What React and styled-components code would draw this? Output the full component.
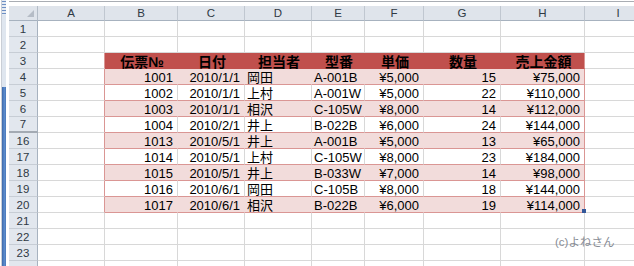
import React from "react"
import styled, { createGlobalStyle, css } from "styled-components"

const GlobalStyle = createGlobalStyle`
  html, body {
    margin: 0;
    padding: 0;
    background: #fff;
    overflow: hidden;
  }
`

const GRID = "#d8d8d8"
const PINK_LINE = "#da9694"
const BAND = "#f2dcdb"
const HEAD = "#c0504d"
const FONT = `"Liberation Sans", "Noto Sans CJK JP", sans-serif`

const columns = ["A", "B", "C", "D", "E", "F", "G", "H", "I"]
const widths = [29, 67, 73, 67, 67, 53, 59, 77, 84, 67]
const align = ["right", "right", "left", "left", "right", "right", "right"]

const header = ["伝票№", "日付", "担当者", "型番", "単価", "数量", "売上金額"]

const records = {
  4: ["1001", "2010/1/1", "岡田", "A-001B", "¥5,000", "15", "¥75,000"],
  5: ["1002", "2010/1/1", "上村", "A-001W", "¥5,000", "22", "¥110,000"],
  6: ["1003", "2010/1/1", "相沢", "C-105W", "¥8,000", "14", "¥112,000"],
  7: ["1004", "2010/2/1", "井上", "B-022B", "¥6,000", "24", "¥144,000"],
  16: ["1013", "2010/5/1", "井上", "A-001B", "¥5,000", "13", "¥65,000"],
  17: ["1014", "2010/5/1", "上村", "C-105W", "¥8,000", "23", "¥184,000"],
  18: ["1015", "2010/5/1", "井上", "B-033W", "¥7,000", "14", "¥98,000"],
  19: ["1016", "2010/6/1", "岡田", "C-105B", "¥8,000", "18", "¥144,000"],
  20: ["1017", "2010/6/1", "相沢", "B-022B", "¥6,000", "19", "¥114,000"],
}

const visibleRows = [1, 2, 3, 4, 5, 6, 7, 16, 17, 18, 19, 20, 21, 22, 23, 24]

const Window = styled.div`
  display: flex;
  width: 634px;
  height: 266px;
  overflow: hidden;
  background: #fff;
  font-family: ${FONT};
`

const Splitter = styled.div`
  display: flex;
  flex-direction: column;
  flex: 0 0 4px;
  margin: 0 3px 0 1px;
  border-left: 1px solid #c9ced6;
`

const SplitGrip = styled.div`
  height: 15px;
  background-image: radial-gradient(circle, #6d8fc4 45%, transparent 50%);
  background-size: 2px 3px;
  background-color: #e6ebf2;
`

const SplitPane = styled.div`
  height: 72px;
  background: #dfe6ef;
`

const SplitBar = styled.div`
  flex: 1;
  background: linear-gradient(90deg, #3d68aa, #5c8ccc 60%, #4a77b8);
`

const Main = styled.div`
  position: relative;
  flex: 1;
  min-width: 0;
  overflow: hidden;
`

const TopEdge = styled.div`
  height: 4px;
  margin-top: 1px;
  border-top: 1px solid #a9adb3;
`

const Sheet = styled.div`
  display: grid;
  grid-template-columns: ${widths.map((w) => `${w}px`).join(" ")};
  grid-template-rows: 15px;
  grid-auto-rows: 16px;
`

const Corner = styled.div`
  position: relative;
  box-sizing: border-box;
  background: #dfe4eb;
  border-right: 1px solid #b3bcc7;
  border-bottom: 1px solid #a7b2bf;

  &::after {
    content: "";
    position: absolute;
    right: 3px;
    bottom: 3px;
    border-style: solid;
    border-width: 0 0 7px 7px;
    border-color: transparent transparent #b5bcc6 transparent;
  }
`

const ColHead = styled.div`
  box-sizing: border-box;
  display: flex;
  align-items: center;
  justify-content: center;
  background: #dfe4eb;
  border-right: 1px solid #c0c7d0;
  border-bottom: 1px solid #a7b2bf;
  color: #2f3944;
  font-size: 11.5px;
  line-height: 14px;
`

const RowHead = styled.div`
  box-sizing: border-box;
  display: flex;
  align-items: center;
  justify-content: center;
  background: #e2e7ee;
  border-right: 1px solid #a7b2bf;
  border-bottom: ${({ $hidden }) => ($hidden ? "2px solid #a3aab3" : "1px solid #c7cdd5")};
  color: #2f3944;
  font-size: 11.5px;
  line-height: 14px;
`

const fills = {
  plain: css`
    background: #fff;
    border-right-color: ${GRID};
    border-bottom-color: ${GRID};
  `,
  head: css`
    background: ${HEAD};
    border-right-color: ${HEAD};
    border-bottom-color: ${HEAD};
    font-weight: bold;
    font-size: 14px;
    justify-content: center;
  `,
  band: css`
    background: ${BAND};
    border-right-color: ${BAND};
    border-bottom-color: ${PINK_LINE};
  `,
  white: css`
    background: #fff;
    border-right-color: ${GRID};
    border-bottom-color: ${PINK_LINE};
  `,
}

const Cell = styled.div`
  box-sizing: border-box;
  display: flex;
  justify-content: ${({ $align }) => ($align === "right" ? "flex-end" : "flex-start")};
  padding: ${({ $align }) => ($align === "right" ? "3px 4px 0 0" : "3px 0 0 2px")};
  border-right: 1px solid;
  border-bottom: 1px solid;
  color: #000;
  font-size: 13px;
  line-height: 12px;
  white-space: nowrap;
  ${({ $fill }) => fills[$fill]}
  ${({ $edge }) =>
    $edge &&
    css`
      border-right-color: ${PINK_LINE};
    `}
`

const Watermark = styled.div`
  position: absolute;
  left: 546px;
  top: 236px;
  color: #878c95;
  font-size: 11.5px;
  line-height: 13px;
`

const FillHandle = styled.div`
  position: absolute;
  left: 573px;
  top: 209px;
  width: 4px;
  height: 4px;
  background: #34589a;
`

const rowKind = (n) => {
  if (n === 3) return "head"
  if (records[n]) return [4, 6, 16, 18, 20].includes(n) ? "band" : "white"
  return "plain"
}

const SheetRow = ({ n }) => {
  const kind = rowKind(n)
  const inTable = kind !== "plain"
  const values = n === 3 ? header : records[n]

  return (
    <>
      <RowHead $hidden={n === 7}>{n <= 23 ? n : ""}</RowHead>
      <Cell $fill="plain" $edge={inTable} />
      {columns.slice(1, 8).map((col, i) => (
        <Cell
          key={col}
          $fill={kind}
          $align={kind === "head" ? "center" : align[i]}
          $edge={inTable && col === "H"}
        >
          {values ? values[i] : ""}
        </Cell>
      ))}
      <Cell $fill="plain" />
    </>
  )
}

export default function App() {
  return (
    <>
      <GlobalStyle />
      <Window>
        <Splitter>
          <SplitGrip />
          <SplitPane />
          <SplitBar />
        </Splitter>
        <Main>
          <TopEdge />
          <Sheet>
            <Corner />
            {columns.map((c) => (
              <ColHead key={c}>{c}</ColHead>
            ))}
            {visibleRows.map((n) => (
              <SheetRow key={n} n={n} />
            ))}
          </Sheet>
          <FillHandle />
          <Watermark>(c)よねさん</Watermark>
        </Main>
      </Window>
    </>
  )
}
